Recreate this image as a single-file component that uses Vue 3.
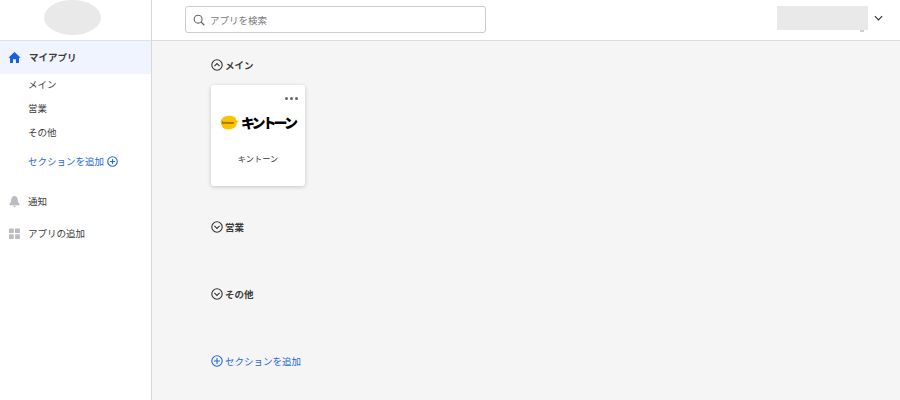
<template>
  <div class="page">
    <aside class="sidebar">
      <div class="logo-area">
        <div class="logo-blur"></div>
      </div>
      <nav class="nav">
        <div class="nav-head">
          <svg class="nav-icon" viewBox="0 0 14 14" width="13" height="13">
            <path d="M7 1.2 L13.6 7.4 H11.8 V12.8 H8.6 V8.8 H5.4 V12.8 H2.2 V7.4 H0.4 Z" fill="#1a5fe0" />
          </svg>
          <span>マイアプリ</span>
        </div>
        <div class="sub-list">
          <div class="sub-item" v-for="s in sections" :key="s">{{ s }}</div>
        </div>
        <div class="add-link">
          <span>セクションを追加</span>
          <svg viewBox="0 0 12 12" width="11" height="11">
            <circle cx="6" cy="6" r="5.2" fill="none" stroke="#2468dc" stroke-width="1.2" />
            <path d="M6 3.2V8.8M3.2 6H8.8" stroke="#2468dc" stroke-width="1.2" />
          </svg>
        </div>
        <div class="nav-item first">
          <svg class="nav-icon" viewBox="0 0 14 14" width="13" height="13">
            <path d="M7 1C4.9 1 3.8 2.6 3.6 4.6 3.4 7.2 2.6 8.6 1.4 10V11H12.6V10C11.4 8.6 10.6 7.2 10.4 4.6 10.2 2.6 9.1 1 7 1Z" fill="#bcbcc0" />
            <path d="M5.6 11.6H8.4C8.2 12.5 7.7 12.9 7 12.9S5.8 12.5 5.6 11.6Z" fill="#bcbcc0" />
          </svg>
          <span>通知</span>
        </div>
        <div class="nav-item">
          <svg class="nav-icon" viewBox="0 0 14 14" width="13" height="13">
            <rect x="1" y="1.5" width="5.2" height="5" rx="0.6" fill="#bcbcc0" />
            <rect x="7.6" y="1.5" width="5.2" height="5" rx="0.6" fill="#bcbcc0" />
            <rect x="1" y="7.8" width="5.2" height="5" rx="0.6" fill="#bcbcc0" />
            <rect x="7.6" y="7.8" width="5.2" height="5" rx="0.6" fill="#bcbcc0" />
          </svg>
          <span>アプリの追加</span>
        </div>
      </nav>
    </aside>

    <div class="main">
      <header class="topbar">
        <div class="search">
          <svg viewBox="0 0 14 14" width="12" height="12">
            <circle cx="6" cy="6" r="4.6" fill="none" stroke="#5f6468" stroke-width="1.3" />
            <path d="M9.4 9.4 13.2 13.2" stroke="#5f6468" stroke-width="1.5" />
          </svg>
          <span>アプリを検索</span>
        </div>
        <div class="user">
          <div class="user-blur"></div>
          <svg viewBox="0 0 10 6" width="9" height="6">
            <path d="M1 1 5 5 9 1" fill="none" stroke="#333" stroke-width="1.3" />
          </svg>
        </div>
      </header>

      <main class="content">
        <section class="section open">
          <div class="section-head">
            <svg viewBox="0 0 12 12" width="12" height="12">
              <circle cx="6" cy="6" r="5.2" fill="none" stroke="#333" stroke-width="1.1" />
              <path d="M3.4 7.2 6 4.6 8.6 7.2" fill="none" stroke="#333" stroke-width="1.1" />
            </svg>
            <span>メイン</span>
          </div>
          <div class="card">
            <div class="dots"><i></i><i></i><i></i></div>
            <div class="app-logo">
              <svg viewBox="0 0 18 14" width="19" height="15">
                <path d="M0.5 6.6C1.2 3.6 2.6 1.4 5.4 1 7.6 0.2 11.6 0.4 13.4 1.6 14.8 2.6 15.2 3.8 15.6 5.2L18 5.4 15.8 7.4C15.6 10 14 12.4 11.4 13 8.6 14 4.6 13.6 3 12.2 1.8 11 1.2 8.6 0.5 6.6Z" fill="#fcc100" />
                <text x="1.8" y="8" font-size="4" font-weight="700" textLength="11.5" lengthAdjust="spacingAndGlyphs" fill="#5a4700" font-family="Liberation Sans, sans-serif">kintone</text>
              </svg>
              <span class="logo-word">キントーン</span>
            </div>
            <div class="app-name">キントーン</div>
          </div>
        </section>

        <section class="section">
          <div class="section-head">
            <svg viewBox="0 0 12 12" width="12" height="12">
              <circle cx="6" cy="6" r="5.2" fill="none" stroke="#333" stroke-width="1.1" />
              <path d="M3.4 4.8 6 7.4 8.6 4.8" fill="none" stroke="#333" stroke-width="1.1" />
            </svg>
            <span>営業</span>
          </div>
        </section>

        <section class="section">
          <div class="section-head">
            <svg viewBox="0 0 12 12" width="12" height="12">
              <circle cx="6" cy="6" r="5.2" fill="none" stroke="#333" stroke-width="1.1" />
              <path d="M3.4 4.8 6 7.4 8.6 4.8" fill="none" stroke="#333" stroke-width="1.1" />
            </svg>
            <span>その他</span>
          </div>
        </section>

        <div class="add-bottom">
          <svg viewBox="0 0 12 12" width="12" height="12">
            <circle cx="6" cy="6" r="5.2" fill="none" stroke="#2468dc" stroke-width="1.1" />
            <path d="M6 3V9M3 6H9" stroke="#2468dc" stroke-width="1.1" />
          </svg>
          <span>セクションを追加</span>
        </div>
      </main>
    </div>
  </div>
</template>

<script setup>
const sections = ['メイン', '営業', 'その他']
</script>

<style>
html, body {
  margin: 0;
  overflow: hidden;
}
</style>

<style scoped>
.page {
  display: flex;
  width: 900px;
  height: 400px;
  overflow: hidden;
  font-family: "Noto Sans CJK JP", "Liberation Sans", sans-serif;
  font-size: 9.5px;
  color: #3c3c3c;
  background: #f5f5f5;
}

.sidebar {
  width: 151px;
  flex-shrink: 0;
  background: #fff;
  border-right: 1px solid #d8d8dc;
}

.logo-area {
  height: 40px;
  display: flex;
  justify-content: center;
  padding-right: 7px;
  border-bottom: 1px solid #e2e2e6;
}

.logo-blur {
  width: 57px;
  height: 35px;
  border-radius: 50%;
  background: #e9e9e9;
}

.nav-head {
  height: 32px;
  display: flex;
  align-items: center;
  gap: 8px;
  padding: 0 0 1px 8px;
  background: #f0f4ff;
  font-weight: 700;
}

.nav-icon {
  flex-shrink: 0;
}

.sub-list {
  margin-top: -2px;
}

.sub-item {
  height: 24px;
  line-height: 24px;
  padding-left: 28px;
}

.add-link {
  display: flex;
  align-items: center;
  gap: 3px;
  margin-top: 5px;
  height: 24px;
  padding-left: 28px;
  color: #2468dc;
}

.nav-item {
  height: 32px;
  display: flex;
  align-items: center;
  gap: 7px;
  padding-left: 8px;
}

.nav-item.first {
  margin-top: 12px;
}

.main {
  flex: 1;
  min-width: 0;
}

.topbar {
  height: 40px;
  display: flex;
  align-items: center;
  justify-content: space-between;
  padding: 0 17px 0 33px;
  background: #fff;
  border-bottom: 1px solid #dcdcdc;
}

.search {
  width: 301px;
  height: 27px;
  margin-top: -1px;
  display: flex;
  align-items: center;
  gap: 5px;
  padding-left: 7px;
  box-sizing: border-box;
  border: 1.5px solid #c8ccd0;
  border-radius: 3px;
  color: #777;
}

.user {
  position: relative;
  display: flex;
  align-items: center;
  gap: 6px;
  margin-top: -5px;
}

.user::after {
  content: "";
  position: absolute;
  right: 19px;
  bottom: -2px;
  width: 4px;
  height: 2px;
  background: #cfcfcf;
}

.user-blur {
  width: 91px;
  height: 24px;
  background: #e9e9e9;
}

.content {
  padding: 17px 0 0 59px;
}

.section {
  height: 67px;
}

.section.open {
  height: 162px;
}

.section-head {
  display: flex;
  align-items: center;
  gap: 2px;
  height: 14px;
  font-weight: 700;
}

.card {
  position: relative;
  width: 94px;
  height: 101px;
  margin-top: 13px;
  background: #fff;
  border-radius: 3px;
  box-shadow: 0 1px 4px rgba(0, 0, 0, 0.2);
}

.dots {
  position: absolute;
  top: 12px;
  right: 7px;
  display: flex;
  gap: 2px;
}

.dots i {
  width: 3px;
  height: 3px;
  border-radius: 50%;
  background: #666;
}

.app-logo {
  position: absolute;
  top: 27px;
  left: 9px;
  display: flex;
  align-items: center;
  gap: 2px;
  color: #000;
  white-space: nowrap;
}

.logo-word {
  font-size: 14px;
  font-weight: 900;
  letter-spacing: -3px;
}

.app-name {
  position: absolute;
  top: 67px;
  left: 0;
  right: 0;
  text-align: center;
  font-size: 8.2px;
}

.add-bottom {
  display: flex;
  align-items: center;
  gap: 2px;
  color: #2468dc;
  height: 14px;
}
</style>
